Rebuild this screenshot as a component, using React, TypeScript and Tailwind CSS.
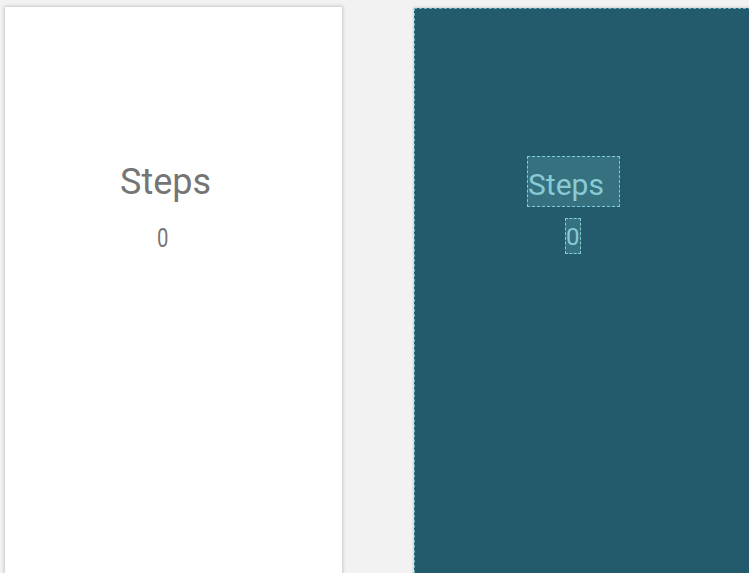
export default function App() {
  return (
    <div className="h-[573px] w-[749px] overflow-hidden bg-[#f2f2f2] font-['Roboto',sans-serif]">
      <div className="flex items-start pl-[5px] gap-[72px]">
        {/* Design view */}
        <div className="mt-[7px] h-[600px] w-[337px] shrink-0 bg-white shadow-[0_0_3px_1px_rgba(0,0,0,0.18)]">
          <div className="ml-[115px] mt-[149px] h-[51px] w-[93px]">
            <div className="pt-[8px] text-[36px] leading-[36px] text-[#757575]">Steps</div>
          </div>
          <div className="ml-[152px] mt-[11px] h-[36px] w-[16px]">
            <div className="origin-left scale-x-[0.78] pt-[7px] text-[26px] leading-[26px] text-[#757575]">0</div>
          </div>
        </div>

        {/* Blueprint view */}
        <div className="mt-[8px] h-[600px] w-[337px] shrink-0 border border-dashed border-[#6fb3c3] bg-[#235b6c] shadow-[0_0_2px_1px_rgba(0,0,0,0.12)]">
          <div className="ml-[112px] mt-[147px] h-[51px] w-[93px] border border-dashed border-[#7ccbd8] bg-[#35717f]">
            <div className="pt-[13px] text-[30px] leading-[30px] text-[#88cad6]">Steps</div>
          </div>
          <div className="ml-[150px] mt-[11px] h-[36px] w-[16px] border border-dashed border-[#7ccbd8] bg-[#35717f]">
            <div className="pt-[6px] text-[24px] leading-[24px] text-[#88cad6]">0</div>
          </div>
        </div>
      </div>
    </div>
  );
}
